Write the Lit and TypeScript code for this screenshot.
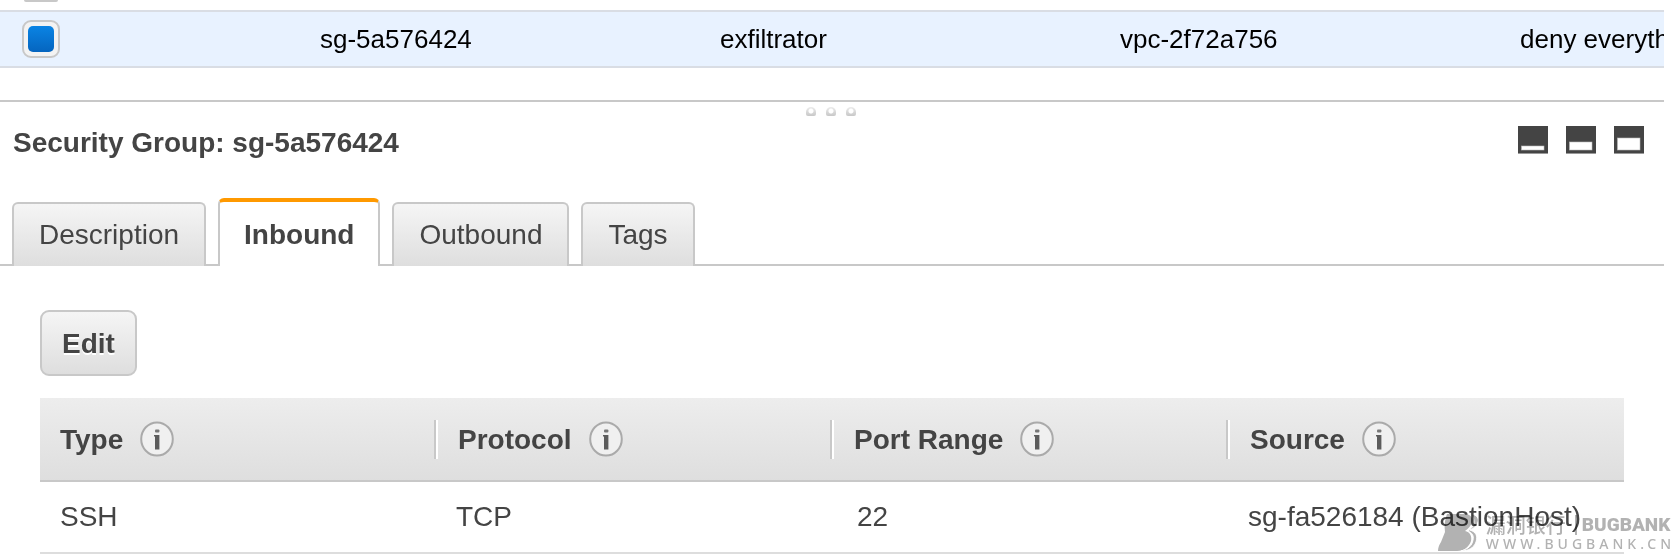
import { LitElement, html, css, svg } from "lit";
import { customElement, state } from "lit/decorators.js";

const TABS = ["Description", "Inbound", "Outbound", "Tags"];
const COLUMNS = ["Type", "Protocol", "Port Range", "Source"];
const RULES = [["SSH", "TCP", "22", "sg-fa526184 (BastionHost)"]];
const PANES = [
  { label: "Minimize panel", top: 20, height: 4 },
  { label: "Split panel", top: 16, height: 8 },
  { label: "Maximize panel", top: 12, height: 12 },
];

@customElement("info-icon")
class InfoIcon extends LitElement {
  static styles = css`
    :host {
      display: block;
      flex: none;
    }
    .icon {
      display: block;
      width: 34px;
      height: 36px;
    }
  `;
  render() {
    return html`<svg class="icon" viewBox="0 0 34 36" aria-hidden="true">
      <ellipse cx="17" cy="18" rx="15.8" ry="16.6" fill="#f0f0f0" stroke="#aaa" stroke-width="2" />
      <rect x="15" y="8.5" width="4.4" height="3" rx="1" fill="#777" />
      <path d="M14 14h5.4v14.5H15V15.5h-1z" fill="#5c5c5c" />
    </svg>`;
  }
}

@customElement("bugbank-mark")
class BugbankMark extends LitElement {
  static styles = css`
    :host {
      display: flex;
      gap: 6px;
      color: #b2b2b2;
      align-items: flex-end;
      mix-blend-mode: multiply;
      pointer-events: none;
    }
    .logo {
      display: block;
      width: 42px;
      height: 40px;
    }
    .words {
      display: flex;
      flex-direction: column;
    }
    .brand {
      display: flex;
      align-items: center;
      gap: 4px;
      height: 22px;
      font: 900 19px/22px Roboto, sans-serif;
      white-space: nowrap;
    }
    .cjk {
      font: 500 20px/22px "Noto Sans CJK SC", sans-serif;
    }
    .bar {
      width: 2px;
      height: 20px;
      margin: 0 1px 0 5px;
      background: currentColor;
    }
    .site {
      font: 500 14px/16px "Noto Sans", sans-serif;
      letter-spacing: 4px;
      white-space: nowrap;
    }
  `;
  render() {
    return html`
      <svg class="logo" viewBox="0 0 42 40" aria-hidden="true">
        <path d="M9 2h19c5 1 7 4 6 8-1 4-4 7-7 9 5 1 7 5 6 10-2 6-7 10-14 10H0c0-3 1-6 3-9l4-10c-1-7 0-13 2-18z" fill="currentColor" />
        <path d="M33 2c6 1 8 4 7 8-1 4-4 6-8 8 6 2 8 6 6 12-2 6-8 9-15 9 7-2 11-5 12-11 1-5-1-7-5-9 3-2 6-5 6-9 0-3-1-6-3-8z" fill="currentColor" stroke="#fff" stroke-width="1" />
      </svg>
      <div class="words">
        <div class="brand"><span class="cjk">漏洞银行</span><span class="bar"></span><span>BUGBANK</span></div>
        <div class="site">WWW.BUGBANK.CN</div>
      </div>
    `;
  }
}

@customElement("app-root")
class AppRoot extends LitElement {
  @state() private active = "Inbound";

  static styles = css`
    :host {
      display: block;
      position: relative;
      overflow: hidden;
      background: #fff;
      color: #444;
      font: 28px/32px "Liberation Sans", Arial, sans-serif;
    }
    .page {
      margin-right: 12px;
    }
    .groups {
      overflow: hidden;
      color: #000;
      font-size: 26px;
    }
    .row {
      display: grid;
      grid-template-columns: 320px repeat(4, 400px);
      align-items: center;
      box-sizing: border-box;
      height: 58px;
      border-top: 2px solid #d9dde4;
      border-bottom: 2px solid #d9dde4;
      background: #e8f2ff;
      white-space: nowrap;
    }
    .previous {
      height: 10px;
      padding-left: 24px;
      display: flex;
      align-items: flex-start;
    }
    .edge {
      box-sizing: border-box;
      width: 34px;
      height: 2px;
      border-bottom: 2px solid #c8c8c8;
      border-radius: 0 0 8px 8px;
    }
    .tick {
      appearance: none;
      display: block;
      box-sizing: border-box;
      width: 38px;
      height: 38px;
      margin: 0 0 0 22px;
      padding: 4px;
      border: 2px solid #c8c8c8;
      border-radius: 9px;
      background: #f3f3f3;
    }
    .tick:checked {
      background: #f3f3f3;
    }
    .tick:checked::before {
      content: "";
      display: block;
      width: 26px;
      height: 26px;
      border-radius: 5px;
      background: linear-gradient(#0a84e4, #0565bf);
    }
    .splitter {
      display: flex;
      justify-content: center;
      gap: 10px;
      height: 10px;
      margin-top: 32px;
      padding: 5px 2px 0 0;
      border-top: 2px solid #c8c8c8;
    }
    .dot {
      box-sizing: border-box;
      width: 10px;
      height: 9px;
      border-radius: 5px 5px 2px 2px;
      background: radial-gradient(circle at 50% 45%, #fff 2px, transparent 3px),
        linear-gradient(#ececec, #c8c8c8);
    }
    .head {
      display: flex;
      justify-content: space-between;
      align-items: flex-start;
      padding: 9px 20px 0 13px;
    }
    .title {
      margin: 0;
      padding-top: 1px;
      font-size: 28px;
      line-height: 32px;
    }
    .panes {
      display: flex;
      gap: 18px;
    }
    .pane {
      display: block;
      width: 30px;
      height: 28px;
      padding: 0;
      border: 0;
      background: none;
    }
    .pane svg {
      display: block;
    }
    .tabs {
      display: flex;
      align-items: flex-end;
      gap: 12px;
      height: 68px;
      margin-top: 39px;
      padding-left: 12px;
      background: linear-gradient(#c8c8c8, #c8c8c8) bottom / 100% 2px no-repeat;
    }
    .tab {
      box-sizing: border-box;
      height: 64px;
      padding: 0 25px;
      border: 2px solid #c8c8c8;
      border-bottom: 0;
      border-radius: 6px 6px 0 0;
      background: linear-gradient(#f5f5f5, #dedede);
      color: #444;
      font: inherit;
    }
    .tab.on {
      height: 68px;
      padding: 2px 24px 0;
      border-top: 4px solid #f90;
      background: #fff;
      font-weight: bold;
    }
    .panel {
      padding: 44px 40px 0;
    }
    .edit {
      display: block;
      box-sizing: border-box;
      height: 66px;
      padding: 2px 20px 0;
      border: 2px solid #c8c8c8;
      border-radius: 9px;
      background: linear-gradient(#f5f5f5, #dedede);
      color: #444;
      font: bold 28px/32px "Liberation Sans", Arial, sans-serif;
      text-shadow: 0 2px 0 #fff;
    }
    .rules {
      width: 100%;
      margin-top: 22px;
      border-collapse: separate;
      border-spacing: 0;
      table-layout: fixed;
    }
    .rules th {
      height: 82px;
      padding: 0;
      border-bottom: 2px solid #c8c8c8;
      text-align: left;
      font-weight: bold;
    }
    .rules thead {
      background: linear-gradient(#ededed, #dedede);
    }
    .label {
      display: flex;
      align-items: center;
      gap: 17px;
      height: 39px;
      padding-left: 20px;
    }
    .name {
      padding-top: 2px;
    }
    th + th .label {
      border-left: 2px solid #fff;
    }
    th:not(:last-child) .label {
      border-right: 2px solid #c8c8c8;
    }
    .rules td {
      height: 70px;
      padding: 0 20px;
      border-bottom: 2px solid #ddd;
      white-space: nowrap;
    }
    .rules .port {
      padding-left: 25px;
    }
    .mark {
      position: absolute;
      right: 1px;
      bottom: 2px;
    }
  `;

  render() {
    return html`
      <div class="page">
        <div class="groups">
          <div class="previous"><span class="edge"></span></div>
          <div class="row">
            <input class="tick" type="checkbox" aria-label="Select sg-5a576424" checked />
            <span>sg-5a576424</span>
            <span>exfiltrator</span>
            <span>vpc-2f72a756</span>
            <span>deny everything</span>
          </div>
        </div>
        <div class="splitter"><i class="dot"></i><i class="dot"></i><i class="dot"></i></div>
        <header class="head">
          <h1 class="title">Security Group: sg-5a576424</h1>
          <div class="panes">
            ${PANES.map(
              (p) => html`<button class="pane" aria-label=${p.label}>
                <svg width="30" height="28" viewBox="0 0 30 28">
                  <rect width="30" height="28" fill="#444" />
                  ${svg`<rect x="3.5" y=${p.top} width="22.5" height=${p.height} fill="#fff" stroke="#bbb" stroke-width=".6" />`}
                  <rect y="27" width="30" height="1" fill="#999" />
                </svg>
              </button>`
            )}
          </div>
        </header>
        <div class="tabs" role="tablist">
          ${TABS.map(
            (t) => html`<button
              class="tab ${t === this.active ? "on" : ""}"
              role="tab"
              aria-selected=${t === this.active}
              @click=${() => (this.active = t)}
            >${t}</button>`
          )}
        </div>
        <section class="panel">
          <button class="edit">Edit</button>
          <table class="rules">
            <thead>
              <tr>
                ${COLUMNS.map(
                  (c) => html`<th scope="col"><div class="label"><span class="name">${c}</span><info-icon></info-icon></div></th>`
                )}
              </tr>
            </thead>
            <tbody>
              ${RULES.map(
                (r) => html`<tr>${r.map((v, i) => html`<td class=${i === 2 ? "port" : ""}>${v}</td>`)}</tr>`
              )}
            </tbody>
          </table>
        </section>
      </div>
      <bugbank-mark class="mark"></bugbank-mark>
    `;
  }
}
